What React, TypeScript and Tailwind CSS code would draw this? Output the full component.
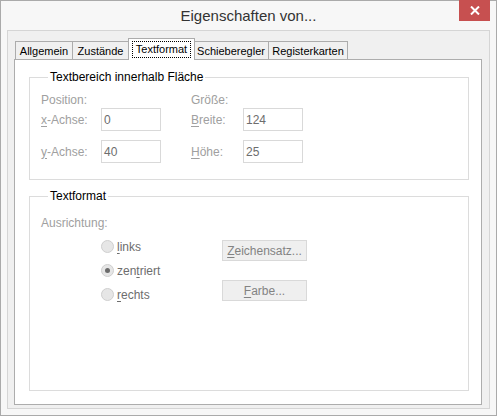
import { ReactNode } from "react";

const font = { fontFamily: '"Segoe UI", "Liberation Sans", Arial, sans-serif' };

const Mn = ({ children }: { children: ReactNode }) => <span className="underline underline-offset-2">{children}</span>;

const Tab = ({ label, w, active }: { label: string; w: string; active?: boolean }) =>
  active ? (
    <div className={`relative z-10 -mx-[1px] -mb-[1px] flex h-[22px] items-center justify-center border border-b-0 border-[#acacac] bg-white ${w}`}>
      <span className="border border-dotted border-black px-[3px] text-[11px] leading-[15px] text-black">{label}</span>
    </div>
  ) : (
    <div className={`-ml-[1px] flex h-[18px] items-center justify-center border border-b-0 border-[#acacac] bg-[#f0f0f0] pt-[1px] text-[11px] text-black first:ml-0 ${w}`}>
      {label}
    </div>
  );

const Field = ({ value }: { value: string }) => (
  <div className="flex h-[23px] w-[60px] items-center border border-[#d9d9d9] bg-white pl-[2px] text-[#6d6d6d]">{value}</div>
);

const Radio = ({ checked, children }: { checked?: boolean; children: ReactNode }) => (
  <div className="flex h-[13px] items-center gap-[3px]">
    <span className="flex h-[13px] w-[13px] items-center justify-center rounded-full border border-[#cfcfcf] bg-[#e6e6e6]">
      {checked && <span className="h-[5px] w-[5px] rounded-full bg-[#6b6b6b]" />}
    </span>
    <span className="text-[#6d6d6d]">{children}</span>
  </div>
);

const Btn = ({ children }: { children: ReactNode }) => (
  <div className="flex h-[21px] w-[85px] items-center justify-center border border-[#d9d9d9] bg-[#efefef] text-[#838383]">{children}</div>
);

export default function App() {
  return (
    <div style={font} className="flex h-[416px] w-[497px] flex-col border border-[#aaaaaa] bg-[#f7f7f7] text-[12px]">
      <div className="relative flex h-[29px] items-center justify-center">
        <span className="pt-[1px] text-[15px] text-[#333333]">Eigenschaften von...</span>
        <div className="absolute right-[6px] -top-[1px] flex h-[21px] w-[31px] items-center justify-center bg-[#c75050]">
          <svg width="10" height="9" viewBox="0 0 10 9">
            <path d="M1 0.5 L9 8.5 M9 0.5 L1 8.5" stroke="white" strokeWidth="2" />
          </svg>
        </div>
      </div>
      <div className="mx-[6px] flex h-[379px] flex-col border border-[#d5d5d5] bg-[#f0f0f0] px-[6px] pt-[7px]">
        <div className="flex h-[21px] items-end pl-[1px]">
          <Tab label="Allgemein" w="w-[58px]" />
          <Tab label="Zustände" w="w-[57px]" />
          <Tab label="Textformat" w="w-[67px]" active />
          <Tab label="Schieberegler" w="w-[76px]" />
          <Tab label="Registerkarten" w="w-[80px]" />
        </div>
        <div className="flex h-[346px] w-[468px] flex-col border border-[#adadad] bg-white pl-[14px] pr-[12px] pt-[10px]">
          <fieldset className="border border-[#dcdcdc] pb-[16px] pl-[11px]">
            <legend className="ml-[7px] px-[2px] leading-[14px] text-black">Textbereich innerhalb Fläche</legend>
            <div className="grid grid-cols-[60px_60px_30px_52px_60px] gap-y-[9px] pt-[9px]">
              <div className="col-span-3 -mb-[8px] leading-[14px] text-[#a0a0a0]">Position:</div>
              <div className="col-span-2 -mb-[8px] leading-[14px] text-[#a0a0a0]">Größe:</div>
              <div className="flex items-center text-[#a0a0a0]"><Mn>x</Mn>-Achse:</div>
              <Field value="0" />
              <div />
              <div className="flex items-center text-[#a0a0a0]"><Mn>B</Mn>reite:</div>
              <Field value="124" />
              <div className="flex items-center text-[#a0a0a0]"><Mn>y</Mn>-Achse:</div>
              <Field value="40" />
              <div />
              <div className="flex items-center text-[#a0a0a0]"><Mn>H</Mn>öhe:</div>
              <Field value="25" />
            </div>
          </fieldset>
          <fieldset className="mt-[9px] h-[202px] border border-[#dcdcdc] pl-[11px]">
            <legend className="ml-[7px] px-[2px] leading-[14px] text-black">Textformat</legend>
            <div className="pt-[13px] leading-[14px] text-[#a0a0a0]">Ausrichtung:</div>
            <div className="flex pl-[60px] pt-[10px]">
              <div className="flex w-[121px] flex-col gap-[11px] pt-0">
                <Radio><Mn>l</Mn>inks</Radio>
                <Radio checked>zen<Mn>t</Mn>riert</Radio>
                <Radio><Mn>r</Mn>echts</Radio>
              </div>
              <div className="flex flex-col gap-[19px]">
                <Btn><Mn>Z</Mn>eichensatz...</Btn>
                <Btn><Mn>F</Mn>arbe...</Btn>
              </div>
            </div>
          </fieldset>
        </div>
      </div>
    </div>
  );
}
